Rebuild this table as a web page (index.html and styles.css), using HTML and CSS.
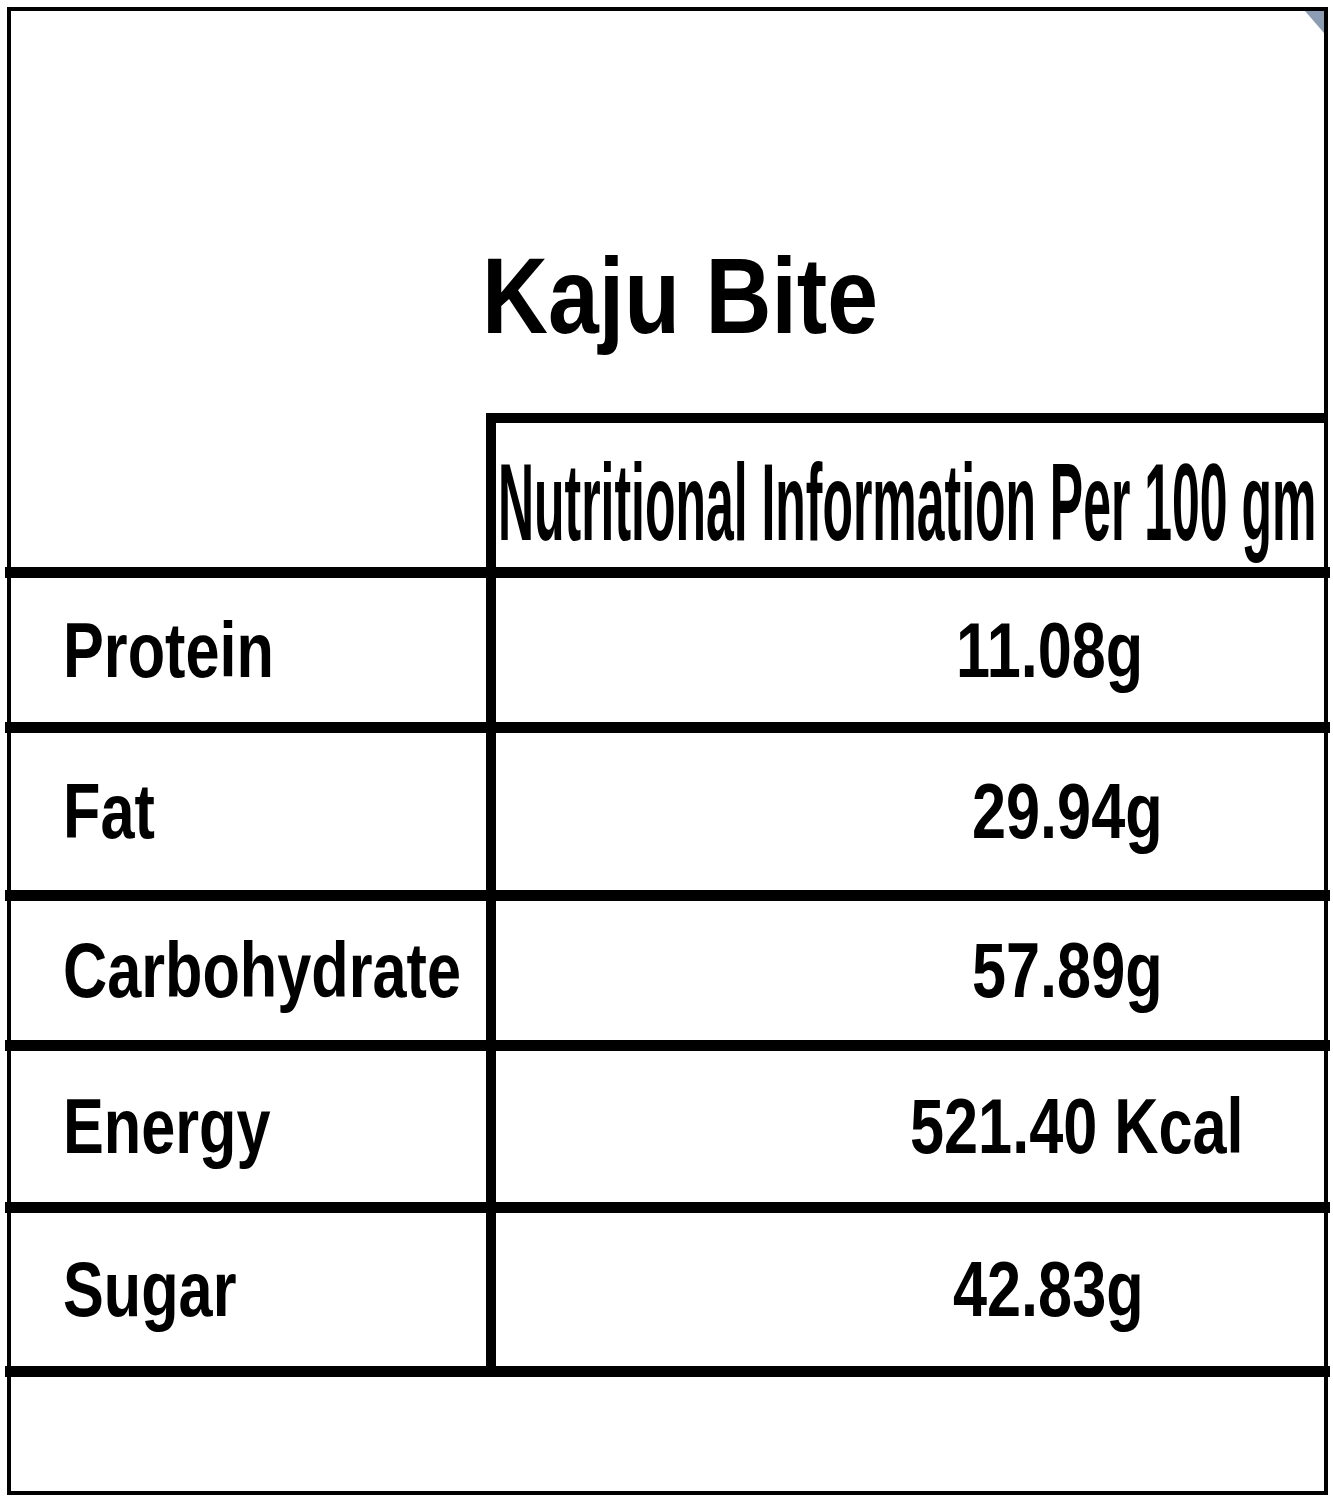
FILE: index.html
```html
<!DOCTYPE html>
<html lang="en">
<head>
<meta charset="utf-8">
<title>Kaju Bite – Nutritional Information</title>
<link rel="stylesheet" href="styles.css">
</head>
<body>
<div class="card">
  <div class="title-area">
    <h1 class="title"><span class="squeeze-title">Kaju Bite</span></h1>
  </div>
  <div class="head-row">
    <div class="cell-left"></div>
    <div class="cell-right head-cell"><span class="squeeze-head">Nutritional Information Per 100 gm</span></div>
  </div>
  <div class="row row-1">
    <div class="cell-left label"><span class="squeeze">Protein</span></div>
    <div class="cell-right value v-1"><span class="squeeze">11.08g</span></div>
  </div>
  <div class="row row-2">
    <div class="cell-left label"><span class="squeeze">Fat</span></div>
    <div class="cell-right value v-2"><span class="squeeze">29.94g</span></div>
  </div>
  <div class="row row-3">
    <div class="cell-left label"><span class="squeeze">Carbohydrate</span></div>
    <div class="cell-right value v-3"><span class="squeeze">57.89g</span></div>
  </div>
  <div class="row row-4">
    <div class="cell-left label"><span class="squeeze">Energy</span></div>
    <div class="cell-right value v-4"><span class="squeeze">521.40 Kcal</span></div>
  </div>
  <div class="row row-5">
    <div class="cell-left label"><span class="squeeze">Sugar</span></div>
    <div class="cell-right value v-5"><span class="squeeze">42.83g</span></div>
  </div>
  <div class="foot-row"></div>
</div>
</body>
</html>
```

FILE: styles.css
```css
html, body {
  margin: 0;
  padding: 0;
  background: #ffffff;
}

body {
  font-family: "Liberation Sans", Arial, sans-serif;
  color: #000000;
  overflow: hidden;
}

.card {
  position: relative;
  box-sizing: border-box;
  width: 1321px;
  height: 1488px;
  margin: 7px 0 0 7px;
  border: 4px solid #000;
  display: flex;
  flex-direction: column;
}

.card::after {
  content: "";
  position: absolute;
  top: 0;
  right: 0;
  width: 19px;
  height: 22px;
  background: #8c9db3;
  clip-path: polygon(0 0, 100% 0, 100% 100%);
}

.title-area {
  height: 402px;
  box-sizing: border-box;
  padding: 232px 0 0 471px;
  flex: none;
  overflow: hidden;
}

.title {
  margin: 0;
  font-size: 107.5px;
  line-height: 1;
  font-weight: 700;
  white-space: nowrap;
}

.squeeze-title {
  display: inline-block;
  transform: scaleX(0.85);
  transform-origin: left center;
}

.head-row {
  height: 154px;
  flex: none;
  display: grid;
  grid-template-columns: 475px minmax(0, 1fr);
}

.cell-left,
.cell-right {
  box-sizing: border-box;
  min-width: 0;
  overflow: hidden;
}

.cell-right {
  border-left: 10px solid #000;
}

.head-cell {
  border-top: 10px solid #000;
  padding: 25px 0 0 2px;
  font-size: 109px;
  line-height: 1;
  font-weight: 700;
  white-space: nowrap;
}

.squeeze-head {
  display: inline-block;
  transform: scaleX(0.458);
  transform-origin: left center;
}

.row {
  box-sizing: border-box;
  flex: none;
  display: grid;
  grid-template-columns: 481px minmax(0, 1fr);
  margin: 0 -6px;
  padding: 0 6px 0 0;
  border-top: 11px solid #000;
  font-size: 77px;
  line-height: 1;
  font-weight: 700;
  white-space: nowrap;
}

.row-1 { height: 155px; }
.row-2 { height: 168px; }
.row-3 { height: 150px; }
.row-4 { height: 162px; }
.row-5 { height: 164px; }

.label,
.value {
  display: flex;
  align-items: center;
}

.row .label {
  padding-left: 58px;
}

.squeeze {
  display: inline-block;
  transform: scaleX(0.795);
  transform-origin: left center;
}

.v-1 { padding-left: 460px; }
.v-2 { padding-left: 476px; }
.v-3 { padding-left: 476px; }
.v-4 { padding-left: 414px; }
.v-5 { padding-left: 457px; }

.foot-row {
  flex: 1;
  margin: 0 -6px;
  border-top: 11px solid #000;
}
```
